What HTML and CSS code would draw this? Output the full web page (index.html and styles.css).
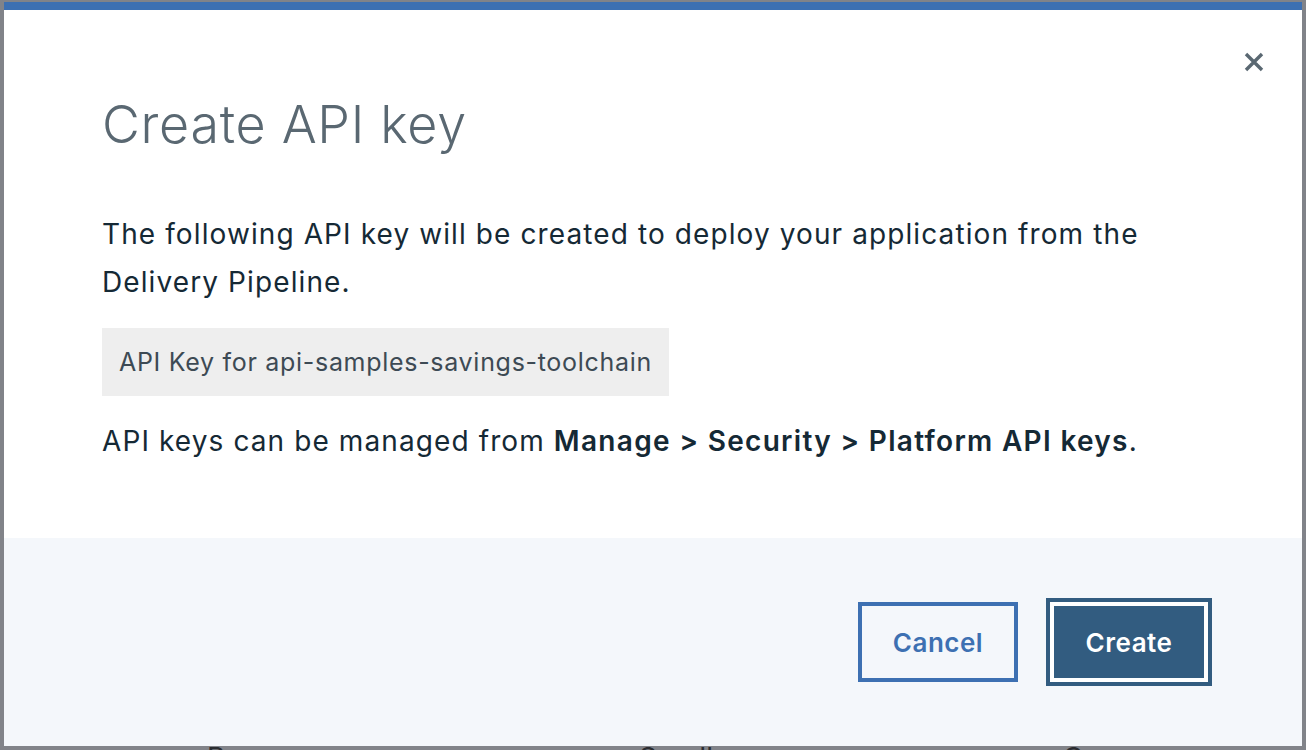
FILE: index.html
```html
<!DOCTYPE html>
<html lang="en">
<head>
<meta charset="utf-8">
<title>Create API key</title>
<link rel="stylesheet" href="styles.css">
</head>
<body>
<div class="overlay">
  <div class="modal">
    <div class="modal-main">
      <div class="modal-header">
        <h2 class="modal-title">Create API key</h2>
        <button class="close" aria-label="Close">
          <svg width="20" height="20" viewBox="0 0 20 20"><path d="M2 2 L18 18 M18 2 L2 18" stroke="#5a6872" stroke-width="3.4" fill="none"/></svg>
        </button>
      </div>
      <p class="text">The following API key will be created to deploy your application from the Delivery Pipeline.</p>
      <div class="keybox">API Key for api-samples-savings-toolchain</div>
      <p class="text note">API keys can be managed from <strong>Manage &gt; Security &gt; Platform API keys</strong>.</p>
    </div>
    <div class="modal-footer">
      <div class="actions">
        <button class="btn btn-secondary">Cancel</button>
        <button class="btn btn-primary">Create</button>
      </div>
    </div>
  </div>
  <div class="behind">
    <span class="w1">Bu</span><span class="w2">Sandbox</span><span class="w3">C</span>
  </div>
</div>
</body>
</html>
```

FILE: styles.css
```css
* { box-sizing: border-box; }
html, body {
  margin: 0;
  padding: 0;
  height: 750px;
  overflow: hidden;
  background: #818389;
  font-family: Inter, "Noto Sans", sans-serif;
}
.overlay {
  padding: 2px 4px 0 4px;
  height: 750px;
}
.modal {
  background: #ffffff;
  border-top: 8px solid #3d70b2;
  height: 744px;
  display: flex;
  flex-direction: column;
}
.modal-main {
  height: 528px;
  padding: 0 0 0 98px;
  display: flex;
  flex-direction: column;
}
.modal-header {
  display: flex;
  justify-content: space-between;
  align-items: flex-start;
}
.modal-title {
  margin: 83px 0 0 0;
  font-size: 52px;
  line-height: 64px;
  font-weight: 300;
  letter-spacing: 0.7px;
  color: #5a6872;
}
.close {
  margin: 42px 38px 0 0;
  width: 20px;
  height: 20px;
  padding: 0;
  border: none;
  background: none;
  display: flex;
}
.text {
  margin: 53px 120px 0 0;
  font-size: 28px;
  line-height: 48px;
  letter-spacing: 1.1px;
  color: #152935;
  font-weight: 400;
}
.text strong { font-weight: 600; letter-spacing: 1.3px; }
.keybox {
  margin-top: 22px;
  align-self: flex-start;
  background: #eeeeee;
  height: 68px;
  line-height: 68px;
  padding: 0 17px;
  font-size: 25px;
  letter-spacing: 0.7px;
  color: #3d4a54;
}
.note { margin-top: 21px; }
.modal-footer {
  flex: 1;
  background: #f4f7fb;
  display: flex;
  justify-content: flex-end;
  align-items: flex-end;
  padding: 0 98px 64px 0;
}
.actions {
  display: flex;
  align-items: center;
  height: 80px;
  gap: 36px;
}
.btn {
  font-family: Inter, "Noto Sans", sans-serif;
  font-size: 26px;
  font-weight: 600;
  letter-spacing: 0.5px;
  padding: 0;
  cursor: pointer;
}
.btn-secondary {
  width: 160px;
  height: 80px;
  background: transparent;
  border: 4px solid #3d70b2;
  color: #3d70b2;
}
.btn-primary {
  width: 150px;
  height: 72px;
  background: #325c80;
  border: none;
  color: #ffffff;
  box-shadow: 0 0 0 4px #ffffff, 0 0 0 8px #325c80;
}
.behind {
  height: 4px;
  overflow: hidden;
  display: flex;
  font-size: 28px;
  line-height: 28px;
  color: #2b2d31;
  padding-left: 203px;
}
.behind span { display: block; margin-top: -2px; }
.w2 { margin-left: 397px; }
.w3 { margin-left: 308px; }
```
